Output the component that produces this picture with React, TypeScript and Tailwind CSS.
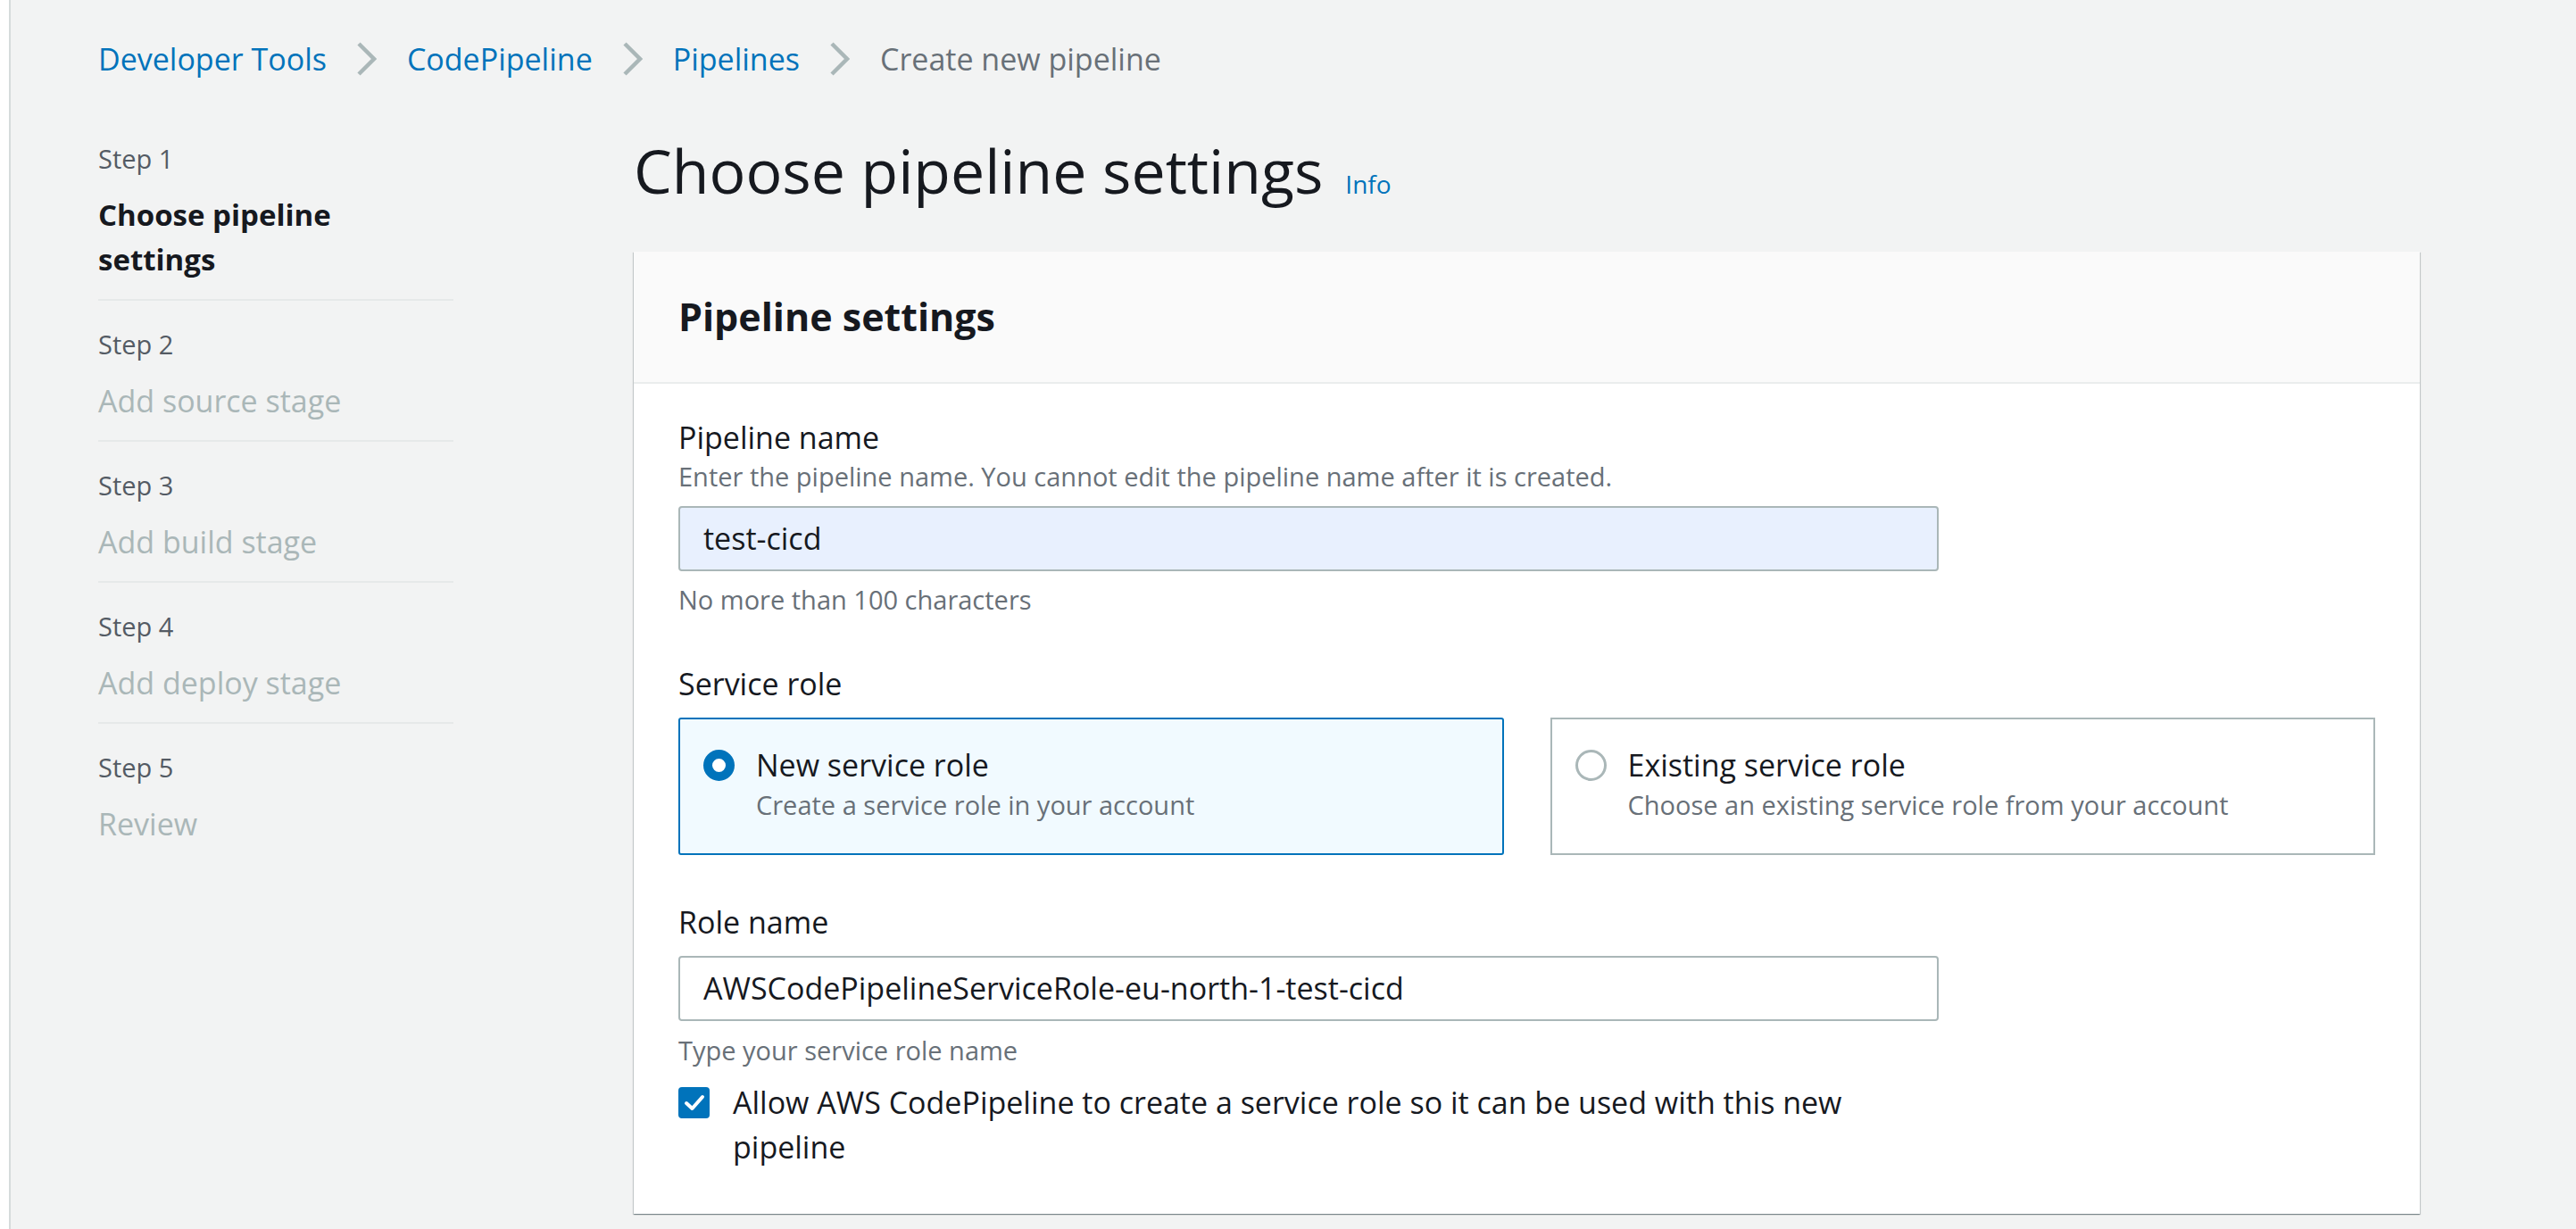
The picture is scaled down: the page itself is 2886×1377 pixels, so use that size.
import React from "react";

const font = { fontFamily: '"Open Sans", "Noto Sans", Arial, sans-serif' };

const Chevron = () => (
  <svg width="22" height="38" viewBox="0 0 22 38" className="mx-[34px] shrink-0">
    <path d="M2 2 L19 19 L2 36" fill="none" stroke="#aab7b8" strokeWidth="4.5" />
  </svg>
);

const steps = [
  { label: "Step 1", title: "Choose pipeline settings", active: true },
  { label: "Step 2", title: "Add source stage" },
  { label: "Step 3", title: "Add build stage" },
  { label: "Step 4", title: "Add deploy stage" },
  { label: "Step 5", title: "Review" },
];

const Radio = ({ checked }: { checked?: boolean }) =>
  checked ? (
    <div className="h-[35px] w-[35px] shrink-0 rounded-full border-[10px] border-[#0073bb] bg-white" />
  ) : (
    <div className="h-[35px] w-[35px] shrink-0 rounded-full border-[3px] border-[#aab7b8] bg-white" />
  );

const RoleCard = ({ title, desc, checked }: { title: string; desc: string; checked?: boolean }) => (
  <div
    className={
      checked
        ? "flex h-[154px] items-start gap-[24px] rounded-[3px] border-2 border-[#0073bb] bg-[#f1faff] px-[26px] pt-[34px]"
        : "flex h-[154px] items-start gap-[24px] border-2 border-[#aab7b8] bg-white px-[26px] pt-[34px]"
    }
  >
    <Radio checked={checked} />
    <div className="-mt-[5px] flex flex-col">
      <span className="text-[34px] leading-[44px] text-[#16191f]">{title}</span>
      <span className="mt-[5px] text-[29px] leading-[36px] text-[#687078]">{desc}</span>
    </div>
  </div>
);

export default function App() {
  return (
    <div className="flex min-h-screen w-full bg-white" style={font}>
      <div className="w-[10px] shrink-0 bg-white" />
      <div className="flex-1 border-l-2 border-[#d5dbdb] bg-[#f2f3f3] pl-[98px] pb-[40px]">
        {/* breadcrumbs */}
        <nav className="flex items-center pt-[44px] text-[34px] leading-[44px]">
          <span className="text-[#0073bb]">Developer Tools</span>
          <Chevron />
          <span className="text-[#0073bb]">CodePipeline</span>
          <Chevron />
          <span className="text-[#0073bb]">Pipelines</span>
          <Chevron />
          <span className="text-[#687078]">Create new pipeline</span>
        </nav>

        <div className="mt-[63px] flex items-start">
          {/* wizard steps */}
          <aside className="w-[398px] shrink-0 pt-[7px]">
            {steps.map((s, i) => (
              <div
                key={s.label}
                className={
                  i === steps.length - 1
                    ? "pt-[29px]"
                    : i === 0
                    ? "border-b-2 border-[#e6e9e9] pb-[19px]"
                    : "border-b-2 border-[#e6e9e9] pt-[29px] pb-[19px]"
                }
              >
                <div className="text-[29px] leading-[40px] text-[#545b64]">{s.label}</div>
                <div
                  className={
                    s.active
                      ? "mt-[18px] max-w-[370px] text-[33px] font-bold leading-[50px] text-[#16191f]"
                      : "mt-[18px] text-[34px] leading-[50px] text-[#aab7b8]"
                  }
                >
                  {s.title}
                </div>
              </div>
            ))}
          </aside>

          {/* main */}
          <main className="ml-[202px] w-[2001px] shrink-0">
            <div className="flex items-baseline">
              <h1 className="text-[68px] font-normal leading-[80px] text-[#16191f]">Choose pipeline settings</h1>
              <span className="ml-[25px] text-[28px] text-[#0073bb]">Info</span>
            </div>

            <section className="mt-[51px] bg-white shadow-[0_1px_1px_0_rgba(0,28,36,0.3),1px_1px_1px_0_rgba(0,28,36,0.15),-1px_1px_1px_0_rgba(0,28,36,0.15)]">
              <header className="flex h-[148px] items-center border-b-2 border-[#eaeded] bg-[#fafafa] px-[50px]">
                <h2 className="text-[43px] font-bold leading-[52px] text-[#16191f]">Pipeline settings</h2>
              </header>

              <div className="px-[50px] pt-[38px] pb-[50px]">
                <div className="text-[34px] leading-[44px] text-[#16191f]">Pipeline name</div>
                <div className="mt-[4px] text-[29px] leading-[36px] text-[#687078]">
                  Enter the pipeline name. You cannot edit the pipeline name after it is created.
                </div>
                <div className="mt-[15px] flex h-[73px] w-[1412px] items-center rounded-[4px] border-2 border-[#aab7b8] bg-[#e8f0fe] px-[26px] text-[34px] text-[#16191f]">
                  test-cicd
                </div>
                <div className="mt-[14px] text-[29px] leading-[36px] text-[#687078]">No more than 100 characters</div>

                <div className="mt-[54px] text-[34px] leading-[44px] text-[#16191f]">Service role</div>
                <div className="mt-[16px] grid grid-cols-2 gap-[52px]">
                  <RoleCard checked title="New service role" desc="Create a service role in your account" />
                  <RoleCard title="Existing service role" desc="Choose an existing service role from your account" />
                </div>

                <div className="mt-[53px] text-[34px] leading-[44px] text-[#16191f]">Role name</div>
                <div className="mt-[16px] flex h-[73px] w-[1412px] items-center rounded-[4px] border-2 border-[#aab7b8] bg-white px-[26px] text-[34px] text-[#16191f]">
                  AWSCodePipelineServiceRole-eu-north-1-test-cicd
                </div>
                <div className="mt-[15px] text-[29px] leading-[36px] text-[#687078]">Type your service role name</div>

                <label className="mt-[15px] flex w-[1412px] items-start">
                  <span className="mt-[8px] flex h-[35px] w-[35px] shrink-0 items-center justify-center rounded-[4px] bg-[#0073bb]">
                    <svg width="24" height="20" viewBox="0 0 24 20">
                      <path d="M3 10 L9.5 16 L21 3" fill="none" stroke="#fff" strokeWidth="4" strokeLinecap="round" strokeLinejoin="round" />
                    </svg>
                  </span>
                  <span className="ml-[26px] text-[34px] leading-[50px] text-[#16191f]">
                    Allow AWS CodePipeline to create a service role so it can be used with this new pipeline
                  </span>
                </label>
              </div>
            </section>
          </main>
        </div>
      </div>
    </div>
  );
}
